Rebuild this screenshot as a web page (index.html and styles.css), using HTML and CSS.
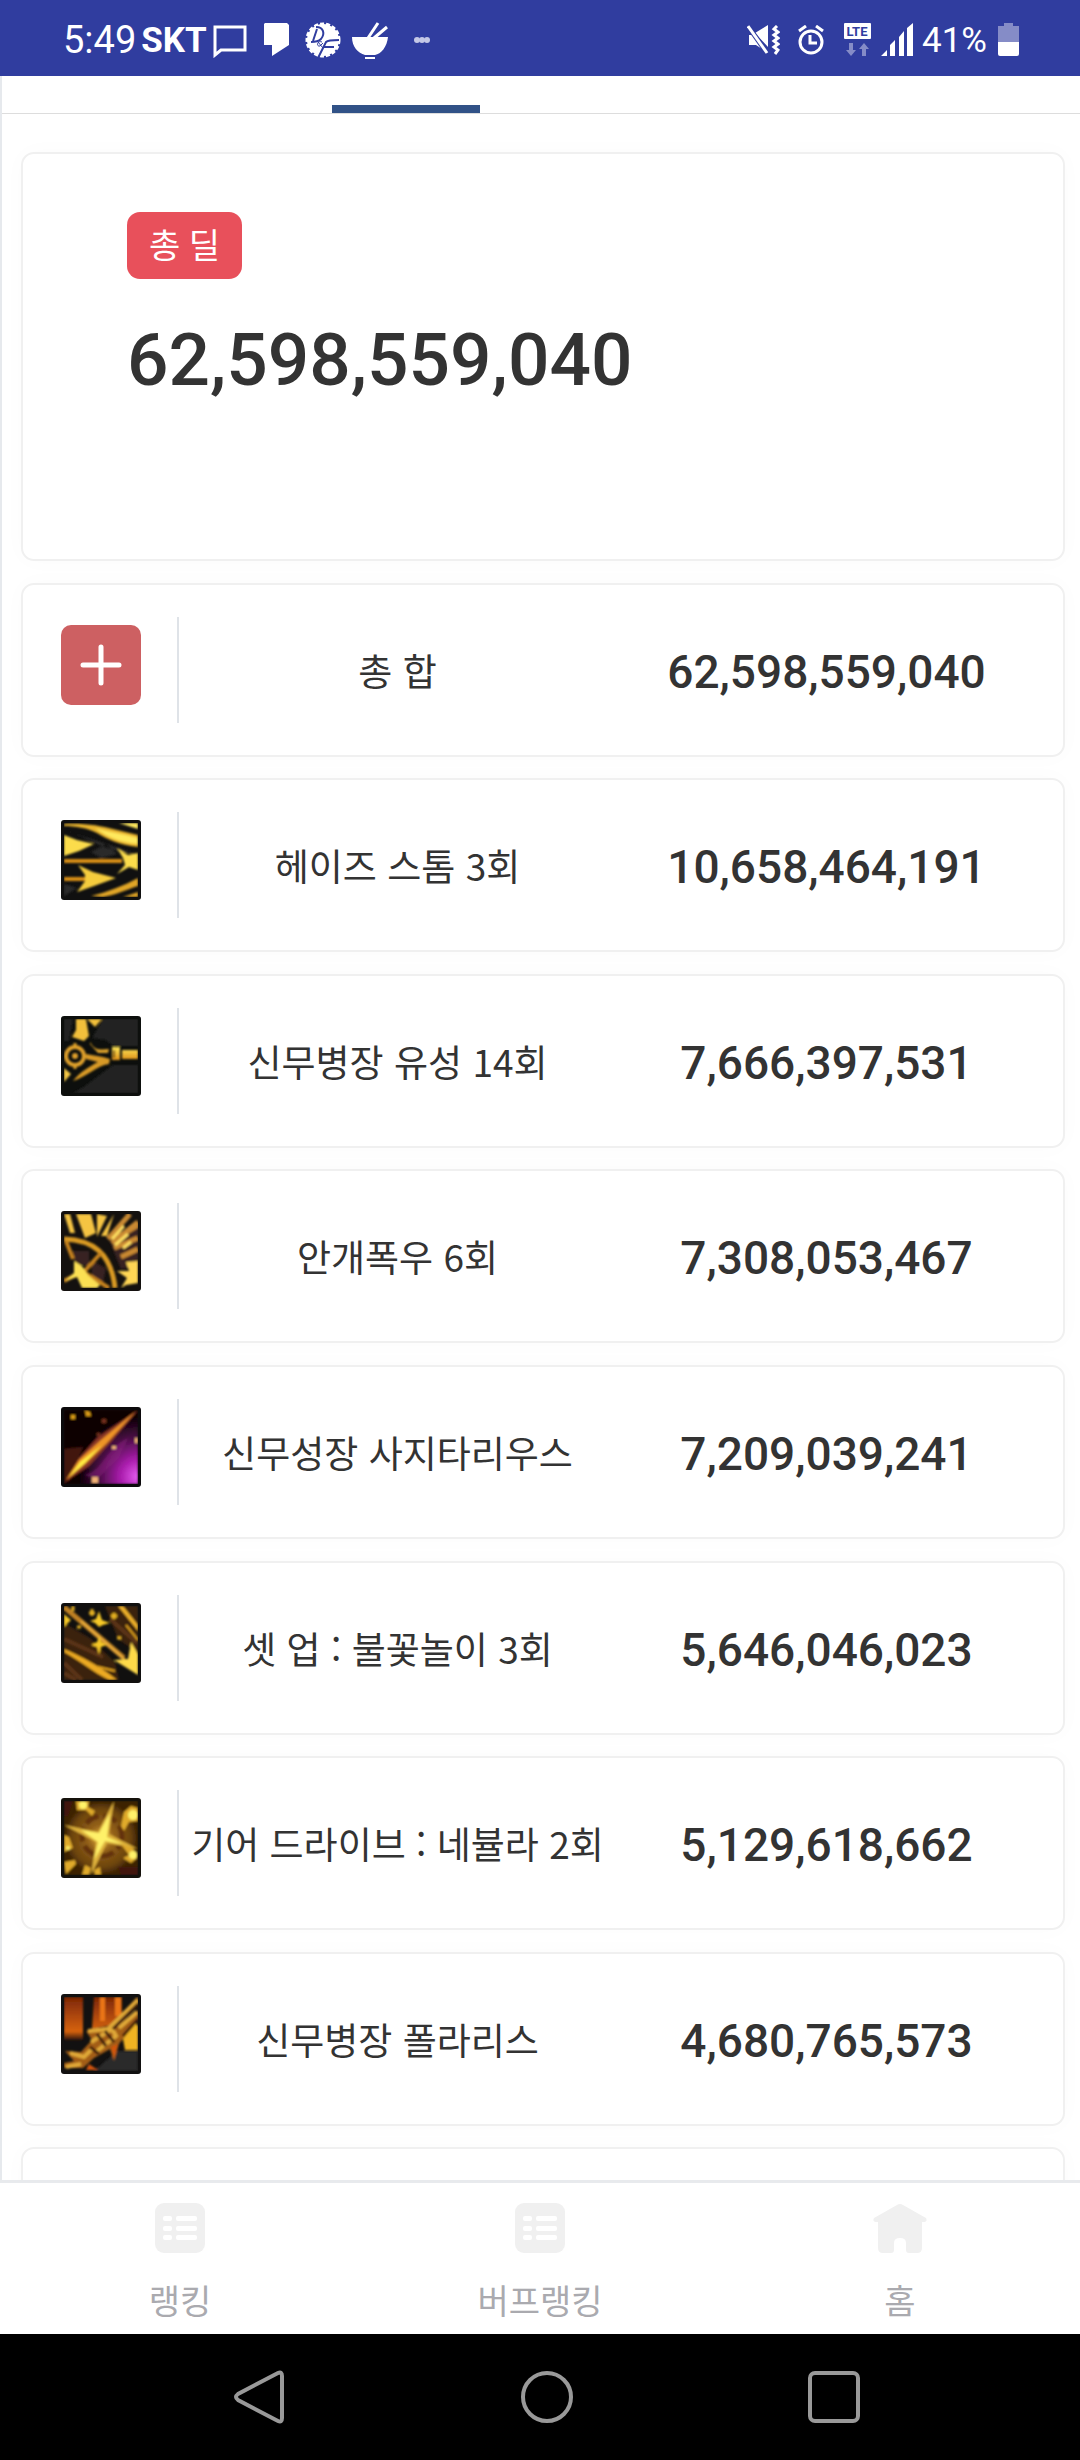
FILE: index.html
```
<!DOCTYPE html>
<html lang="ko">
<head>
    <meta charset="UTF-8">
    <meta name="viewport" content="width=device-width, initial-scale=1.0">
    <title>총 딜</title>
    <link rel="stylesheet" href="styles.css">
</head>
<body>
    <svg class="defs" aria-hidden="true">
        <defs>
            <linearGradient id="gold" x1="0" y1="0" x2="0" y2="1">
                <stop offset="0" stop-color="#ffe85a"/>
                <stop offset="1" stop-color="#dc8f18"/>
            </linearGradient>
            <radialGradient id="purple" cx="1" cy="0.9" r="0.8">
                <stop offset="0" stop-color="#e65cf0"/>
                <stop offset="0.3" stop-color="#a81cab"/>
                <stop offset="0.65" stop-color="#4d0e48"/>
                <stop offset="1" stop-color="#0a0004"/>
            </radialGradient>
            <radialGradient id="nebula">
                <stop offset="0" stop-color="#e8b43a"/>
                <stop offset="0.35" stop-color="#94611a"/>
                <stop offset="0.8" stop-color="#6b430c"/>
                <stop offset="1" stop-color="#3c2204"/>
            </radialGradient>
            <linearGradient id="fire" x1="0" y1="0" x2="0" y2="1">
                <stop offset="0" stop-color="#7d2606"/>
                <stop offset="0.8" stop-color="#d6630b"/>
                <stop offset="1" stop-color="#2a1208"/>
            </linearGradient>
            <filter id="soft" x="-10%" y="-10%" width="120%" height="120%">
                <feGaussianBlur stdDeviation="1"/>
            </filter>
            <clipPath id="tile"><rect x="3" y="3" width="74" height="74"/></clipPath>
            <symbol id="list-icon" viewBox="0 0 50 50">
                <rect width="50" height="50" rx="9" fill="#f0f0f0"/>
                <g fill="#fff">
                    <rect x="8" y="13" width="9" height="5" rx="2"/><rect x="21" y="13" width="21" height="5" rx="2"/>
                    <rect x="8" y="23" width="9" height="5" rx="2"/><rect x="21" y="23" width="21" height="5" rx="2"/>
                    <rect x="8" y="32" width="9" height="5" rx="2"/><rect x="21" y="32" width="21" height="5" rx="2"/>
                </g>
            </symbol>
        </defs>
    </svg>

    <header class="status-bar">
        <div class="status-left">
            <span class="clock">5:49</span>
            <span class="carrier">SKT</span>
            <svg width="34" height="36" viewBox="0 0 34 36"><path d="M2 5H32V28H8L2 33Z" fill="none" stroke="#fff" stroke-width="3"/></svg>
            <svg class="note" width="26" height="36" viewBox="0 0 26 36"><path d="M2 1H24L26 3V23L9 34V23H1V2Z" fill="#fff"/></svg>
            <svg class="badge-icon" width="36" height="36" viewBox="0 0 36 36">
                <circle cx="18" cy="18" r="16" fill="#fff"/>
                <circle cx="18" cy="18" r="16" fill="none" stroke="#fff" stroke-width="3" stroke-dasharray="4 2"/>
                <g fill="none" stroke="#303d9f" stroke-width="2">
                    <path d="M11 5C19 5 20 12 16 17C13 20 9 20 6 20M12 7L8 19M14 34L21 20Q23 18 34 18M19 25H29"/>
                    <path d="M17 20C12 18 11 25 15 24L18 21M13 20L18 26" stroke-width="1"/>
                </g>
            </svg>
            <svg class="bowl" width="38" height="38" viewBox="0 0 38 38">
                <path d="M1 16H37C36 26 30 33 24 34H14C7 32 1 26 1 16ZM14 36H24V38H14Z" fill="#fff"/>
                <path d="M17 17L27 2M23 17L36 6" stroke="#fff" stroke-width="3"/>
            </svg>
            <svg class="dots" width="16" height="6" viewBox="0 0 16 6"><g fill="#c4c8e6"><circle cx="3" cy="3" r="3"/><circle cx="8" cy="3" r="3"/><circle cx="13" cy="3" r="3"/></g></svg>
        </div>
        <div class="status-right">
            <svg class="mute" width="33" height="30" viewBox="0 0 33 30">
                <path d="M8 8L21 0V22ZM2 10L5 10L21 28L9 20H2Z" fill="#fff"/>
                <path d="M1 1L20 28" stroke="#303d9f" stroke-width="5"/>
                <path d="M1 1L20 28" stroke="#fff" stroke-width="3"/>
                <path d="M30 1L27 4L31 7L27 10L31 13L27 16L31 19L27 22L31 25L28 29" fill="none" stroke="#fff" stroke-width="3"/>
            </svg>
            <svg class="alarm" width="26" height="30" viewBox="0 0 26 30">
                <circle cx="13" cy="17" r="11" fill="none" stroke="#fff" stroke-width="3"/>
                <path d="M12 10V18H19M1 6L8 1M18 1L25 6" fill="none" stroke="#fff" stroke-width="3"/>
            </svg>
            <svg class="lte" width="28" height="34" viewBox="0 0 28 34">
                <rect width="27" height="16" rx="1" fill="#fff"/>
                <text x="13" y="13" text-anchor="middle" class="lte-text">LTE</text>
                <path d="M5 20H9V27H12L7 33L2 27H5ZM18 33H22V26H25L20 20L15 26H18Z" fill="#858cc7"/>
            </svg>
            <svg width="33" height="34" viewBox="0 0 33 34"><path d="M0 33L6 27V33ZM9 22L14 17V33H9ZM18 14L23 8V33H18ZM26 5L32 0V33H26Z" fill="#fff"/></svg>
            <span class="percent">41%</span>
            <svg width="22" height="34" viewBox="0 0 22 34"><path d="M6 0H15V3H21V20H0V3H6Z" fill="#858cc7"/><path d="M0 19H21V31Q21 33 19 33H2Q0 33 0 31Z" fill="#fff"/></svg>
        </div>
    </header>

    <main class="content">
        <div class="tabs"><span class="tab-line"></span></div>

        <div class="cards">
            <section class="card summary">
                <span class="badge">총 딜</span>
                <h1 class="total">62,598,559,040</h1>
            </section>

            <section class="card row">
                <div class="row-icon">
                    <svg viewBox="0 0 80 80"><rect width="80" height="80" rx="10" fill="#cd6062"/><path d="M22 40H58M40 22V58" stroke="#fff" stroke-width="5" stroke-linecap="round"/></svg>
                </div>
                <div class="name">총 합</div>
                <div class="value">62,598,559,040</div>
            </section>

            <section class="card row">
                <div class="row-icon">
                    <svg viewBox="0 0 80 80">
                        <rect width="80" height="80" rx="3" fill="#101010"/>
                        <g clip-path="url(#tile)"><g filter="url(#soft)">
                            <path d="M3 10C22 14 36 30 76 34M30 32L45 24L56 34L40 38ZM3 76V64L16 68Z" fill="#292929"/>
                            <path d="M3 4C24 3 40 6 52 9L77 15V27C58 25 46 19 36 13C26 8 15 6 3 6Z" fill="#eab52e"/>
                            <path d="M34 8C48 12 62 14 77 18V24C58 22 48 18 34 8ZM58 3H77V9Z" fill="#ffe95d"/>
                            <path d="M3 15L16 20L33 24L18 31L3 36Z" fill="#fbdc4c"/>
                            <path d="M3 41H61M3 59H25" stroke="#d98f18" stroke-width="4"/>
                            <path d="M56 28L67 35L77 33V50L68 47L56 54L64 45L62 38Z" fill="#fbdc4c"/>
                            <path d="M17 45L32 52L55 58L33 66L16 72L24 61V55Z" fill="#f5cc3d"/>
                            <path d="M30 76C46 72 62 66 77 58V66C64 70 55 75 42 77ZM62 77L77 72V77Z" fill="#e0a526"/>
                        </g></g>
                    </svg>
                </div>
                <div class="name">헤이즈 스톰 3회</div>
                <div class="value">10,658,464,191</div>
            </section>

            <section class="card row">
                <div class="row-icon">
                    <svg viewBox="0 0 80 80">
                        <rect width="80" height="80" rx="3" fill="#0d0f0d"/>
                        <g clip-path="url(#tile)"><g filter="url(#soft)">
                            <path d="M42 3H77V30H52L45 24L31 22ZM3 3H12L8 25H3ZM24 70L52 49H77V77H12Z" fill="#232323"/>
                            <path d="M15 3H25L28 20L23 25L11 21L15 14ZM26 3H41L34 11Z" fill="#f2c03a"/>
                            <circle cx="14" cy="40" r="9" fill="none" stroke="#dfa02b" stroke-width="4"/>
                            <circle cx="14" cy="40" r="3" fill="#dfa02b"/>
                            <path d="M14 27V31M14 49V53" stroke="#e0a32b" stroke-width="3"/>
                            <path d="M3 52L10 58L3 66Z" fill="#f5c844"/>
                            <path d="M25 38L42 41L49 43L48 48C35 50 27 60 12 65C19 56 29 50 37 46L25 43Z" fill="#d89a26"/>
                            <path d="M29 26C34 36 41 33 48 33L47 37H37L29 28Z" fill="#dba12b"/>
                            <path d="M51 31H59V44H51ZM61 34H77V43H61Z" fill="url(#gold)"/>
                            <path d="M53 34V42" stroke="#704a10" stroke-width="2"/>
                        </g></g>
                    </svg>
                </div>
                <div class="name">신무병장 유성 14회</div>
                <div class="value">7,666,397,531</div>
            </section>

            <section class="card row">
                <div class="row-icon">
                    <svg viewBox="0 0 80 80">
                        <rect width="80" height="80" rx="3" fill="#14110f"/>
                        <g clip-path="url(#tile)"><g filter="url(#soft)">
                            <path d="M12 40H28V54H14ZM31 50L45 57L42 72L31 66ZM47 26L77 14V55L60 58Z" fill="#382222"/>
                            <path d="M3 3H9L14 22H9ZM15 3H30L35 22L24 27ZM36 3L46 5L36 26ZM53 3L46 25L40 25Z" fill="#f5c443"/>
                            <path d="M69 3L47 28M77 11L51 32M57 26L77 14M53 37L77 27M60 46L77 38" stroke="#c98932" stroke-width="5"/>
                            <path d="M63 15L51 28M67 23L54 34M70 31L62 37" stroke="#ffdf62" stroke-width="3"/>
                            <path d="M3 28C31 29 50 41 54 77" fill="none" stroke="#d99a24" stroke-width="5"/>
                            <path d="M5 30L12 48M20 64L40 42M3 70L18 62M21 60L48 77" fill="none" stroke="#c6821f" stroke-width="4"/>
                            <path d="M13 50L21 55L27 64L39 74L36 77H21L16 66L4 70L13 62Z" fill="#fbe052"/>
                            <path d="M56 60L68 60L65 51L77 50V72L65 74L60 77L66 67Z" fill="#ffd654"/>
                        </g></g>
                    </svg>
                </div>
                <div class="name">안개폭우 6회</div>
                <div class="value">7,308,053,467</div>
            </section>

            <section class="card row">
                <div class="row-icon">
                    <svg viewBox="0 0 80 80">
                        <rect width="80" height="80" rx="3" fill="#0c0a0c"/>
                        <g clip-path="url(#tile)"><g filter="url(#soft)">
                            <rect x="3" y="3" width="74" height="74" fill="url(#purple)"/>
                            <path d="M3 42L22 40L9 73L3 77Z" fill="#421710"/>
                            <path d="M24 68C42 64 44 42 67 31L58 51L36 72Z" fill="#8a2180" opacity="0.5"/>
                            <path d="M5 74L18 51L37 30L77 3L50 35L28 59Z" fill="#8c3826"/>
                            <path d="M5 73L18 53L40 33L74 5L45 37L24 57Z" fill="#ee9426"/>
                            <path d="M8 70L19 55L41 38L24 56Z" fill="#ffee42"/>
                            <path d="M10 8H14V12H10ZM24 3L29 5L30 9H25Z" fill="#dc9c19"/>
                            <path d="M41 12H45V16H41ZM36 26H39V29H36Z" fill="#75331c"/>
                            <path d="M31 70H37V76H31ZM51 39H55V42H51ZM74 31H77V36H74Z" fill="#f1b174"/>
                        </g></g>
                    </svg>
                </div>
                <div class="name">신무성장 사지타리우스</div>
                <div class="value">7,209,039,241</div>
            </section>

            <section class="card row">
                <div class="row-icon">
                    <svg viewBox="0 0 80 80">
                        <rect width="80" height="80" rx="3" fill="#11100f"/>
                        <g clip-path="url(#tile)"><g filter="url(#soft)">
                            <path d="M3 20L29 35L54 59L58 77H3ZM44 3H77V50L57 36Z" fill="#3b2110"/>
                            <path d="M3 60L21 77M3 36L42 54M49 16L76 40M3 70L15 77" stroke="#5c3415" stroke-width="4"/>
                            <path d="M3 4L63 55" stroke="#bf8124" stroke-width="5"/>
                            <path d="M20 18L70 62" stroke="#e9ae3e" stroke-width="2"/>
                            <path d="M70 39L77 51V72L53 57L67 56Z" fill="#ffda4a"/>
                            <path d="M3 46C18 52 42 65 56 77H48C32 69 18 57 3 49Z" fill="#edaa23"/>
                            <path d="M57 3H62L77 22V28Z" fill="#eeb12a"/>
                            <path d="M65 22L77 37M37 64L54 68" stroke="#e5a51e" stroke-width="2"/>
                            <path d="M38 33L40 39L46 42L40 44L38 52L36 44L30 42L36 39ZM38 8L41 17L49 20L42 22L38 24L34 20L29 18L35 16ZM3 11L10 17L3 24Z" fill="#f7c925"/>
                            <path d="M28 10H34M31 6V13M50 13H56M53 10V16M56 35H60M16 24H20M12 3V8" stroke="#e5b123" stroke-width="3"/>
                        </g></g>
                    </svg>
                </div>
                <div class="name">셋 업 : 불꽃놀이 3회</div>
                <div class="value">5,646,046,023</div>
            </section>

            <section class="card row">
                <div class="row-icon">
                    <svg viewBox="0 0 80 80">
                        <rect width="80" height="80" rx="3" fill="#15120c"/>
                        <g clip-path="url(#tile)"><g filter="url(#soft)">
                            <rect x="3" y="3" width="74" height="74" fill="url(#nebula)"/>
                            <circle cx="41" cy="38" r="20" fill="none" stroke="#63330a" stroke-width="5" stroke-dasharray="14 5"/>
                            <path d="M3 3H12L7 18H3ZM57 69H77V77H60Z" fill="#431708"/>
                            <path d="M3 27L37 34L53 3L48 36L77 51L46 45L30 77L35 44Z" fill="#ddb03a"/>
                            <path d="M20 32L38 35L49 15L46 39L62 46L44 43L33 62L37 44Z" fill="#fff169"/>
                            <path d="M15 3H28L27 9L34 13L31 18L25 12H16ZM63 14L70 8L77 10V23L68 24L63 33L60 28ZM3 37L8 39L12 50L3 54ZM3 64L14 62L15 66L5 76ZM24 67L30 70L28 77H21ZM33 72L39 69L40 77H34ZM60 46L72 50L76 60L70 65L62 60L68 57Z" fill="#e0aa2c"/>
                            <g fill="#fff369"><circle cx="22" cy="7" r="4"/><circle cx="72" cy="17" r="5"/><circle cx="72" cy="57" r="4"/><circle cx="7" cy="50" r="2"/></g>
                        </g></g>
                    </svg>
                </div>
                <div class="name">기어 드라이브 : 네뷸라 2회</div>
                <div class="value">5,129,618,662</div>
            </section>

            <section class="card row">
                <div class="row-icon">
                    <svg viewBox="0 0 80 80">
                        <rect width="80" height="80" rx="3" fill="#121111"/>
                        <g clip-path="url(#tile)"><g filter="url(#soft)">
                            <path d="M3 3H22V46H3ZM33 3H61V29L31 35Z" fill="url(#fire)"/>
                            <path d="M54 3H60V22H54ZM39 3H44V27H39Z" fill="#ea7515"/>
                            <path d="M33 77L56 57H77V77Z" fill="#2b2b2b"/>
                            <path d="M62 45L73 27L77 32V56H64Z" fill="#efb322"/>
                            <path d="M77 2V10L57 31L77 16V25L58 50L53 67L49 55L33 64L22 74H3V69L13 67L4 57L20 58L31 46L25 37L49 32Z" fill="#a35d18"/>
                            <path d="M27 37L47 35L77 6M30 48L51 35L55 42L36 57M9 59L23 63L32 54M58 34L76 18M5 73L20 70" fill="none" stroke="#e0a938" stroke-width="4"/>
                            <path d="M52 35L77 10M62 42L77 25M36 40L45 52M44 37L53 48M29 53L38 60" stroke="#3f1d0a" stroke-width="3"/>
                            <path d="M28 70L37 76H25ZM50 53L57 50L53 64Z" fill="#d3550e"/>
                        </g></g>
                    </svg>
                </div>
                <div class="name">신무병장 폴라리스</div>
                <div class="value">4,680,765,573</div>
            </section>

            <section class="card row"></section>
        </div>
    </main>

    <nav class="bottom-nav">
        <a href="#" class="nav-item">
            <svg width="50" height="50"><use href="#list-icon"/></svg>
            <span>랭킹</span>
        </a>
        <a href="#" class="nav-item">
            <svg width="50" height="50"><use href="#list-icon"/></svg>
            <span>버프랭킹</span>
        </a>
        <a href="#" class="nav-item">
            <svg width="54" height="50" viewBox="0 0 54 50"><path d="M24 2Q27 0 30 2L53 15Q55 19 50 19H49V45Q49 50 44 50H36Q33 50 33 47V40Q33 35 27 35T21 40V47Q21 50 18 50H10Q5 50 5 45V19H4Q-1 19 1 15Z" fill="#f0f0f0"/></svg>
            <span>홈</span>
        </a>
    </nav>

    <footer class="system-nav">
        <button type="button" aria-label="뒤로"><svg width="54" height="54" viewBox="0 0 54 54"><path d="M45 3Q49 1 49 6V48Q49 53 45 51L5 30Q1 27 5 24Z"/></svg></button>
        <button type="button" aria-label="홈"><svg width="54" height="54" viewBox="0 0 54 54"><circle cx="27" cy="27" r="24"/></svg></button>
        <button type="button" aria-label="최근 앱"><svg width="54" height="54" viewBox="0 0 54 54"><rect x="3" y="3" width="48" height="48" rx="5"/></svg></button>
    </footer>
</body>
</html>
```

FILE: styles.css
```
:root {
    --bar: #303d9f;
    --tab: #315287;
    --text: #333333;
    --muted: #aaaaaf;
    --line: #e6e9ed;
    --card-border: #f0f0f0;
    --red: #e8505b;
}
* { margin: 0; padding: 0; box-sizing: border-box; }
body {
    height: 100vh; overflow: hidden; display: flex; flex-direction: column;
    font-family: Roboto, 'Noto Sans CJK KR', sans-serif; background: #fff; color: var(--text);
}
svg { display: block; flex-shrink: 0; }
.defs { position: absolute; width: 0; height: 0; }

.status-bar {
    display: flex; justify-content: space-between; align-items: center; flex-shrink: 0;
    height: 76px; padding: 4px 60px 0 63px; background: var(--bar); color: #fff;
}
.status-left, .status-right { display: flex; align-items: center; }
.clock { font-size: 38px; }
.carrier { font-size: 35px; font-weight: 700; margin: 0 6px 0 5px; }
.note { margin-left: 16px; }
.badge-icon { margin-left: 16px; }
.bowl { margin-left: 10px; }
.dots { margin-left: 25px; }
.alarm { margin-left: 18px; }
.lte { margin: 0 9px 0 20px; }
.lte-text { font: 700 13px Roboto, sans-serif; fill: var(--bar); }
.percent { font-size: 35px; margin: 0 11px 0 8px; }

.content { flex: 1; min-height: 0; overflow: hidden; border-left: 2px solid var(--line); }
.tabs {
    display: flex; align-items: flex-end; height: 38px;
    padding-left: 330px; border-bottom: 1px solid #dddddd;
}
.tab-line { width: 148px; height: 8px; background: var(--tab); }
.cards { display: flex; flex-direction: column; gap: 2vw; padding: 38px 15px 0 19px; }
.card {
    flex-shrink: 0; background: #fff; border: 2px solid var(--card-border);
    border-radius: 13px; box-shadow: 0 0 24px rgba(0, 0, 0, 0.02);
}
.summary { height: 409px; padding: 58px 104px; }
.badge {
    display: inline-block; padding: 2px 22px 0; border-radius: 13px; background: var(--red);
    color: #fff; font-size: 34px; line-height: 65px;
}
.total { margin-top: 35px; font-size: 73px; line-height: 92px; font-weight: 500; }

.row { display: flex; align-items: center; height: 174px; padding-right: 22px; }
.row-icon {
    height: 106px; margin-right: 4px; padding: 8px 36px 0 38px;
    border-right: 2px solid #dfe3e8;
}
.row-icon svg { width: 80px; height: 80px; }
.name, .value { flex: 1; text-align: center; white-space: nowrap; }
.name { font-family: 'Noto Sans CJK KR', sans-serif; font-size: 37px; line-height: 54px; }
.value { font-size: 46px; line-height: 54px; font-weight: 500; padding-top: 4px; }

.bottom-nav { display: flex; flex-shrink: 0; height: 154px; border-top: 3px solid #e8eaed; background: #fff; }
.nav-item {
    flex: 1; display: flex; flex-direction: column; align-items: center; gap: 22px;
    padding-top: 20px; color: var(--muted); text-decoration: none;
    font-family: 'Noto Sans CJK KR', sans-serif; font-size: 34px; line-height: 50px;
}
.system-nav {
    display: flex; justify-content: center; flex-shrink: 0;
    height: 126px; padding-left: 14px; background: #000;
}
.system-nav button {
    width: 287px; display: flex; align-items: center; justify-content: center;
    border: none; background: none; cursor: pointer;
}
.system-nav svg { fill: none; stroke: #999; stroke-width: 4; }
```
